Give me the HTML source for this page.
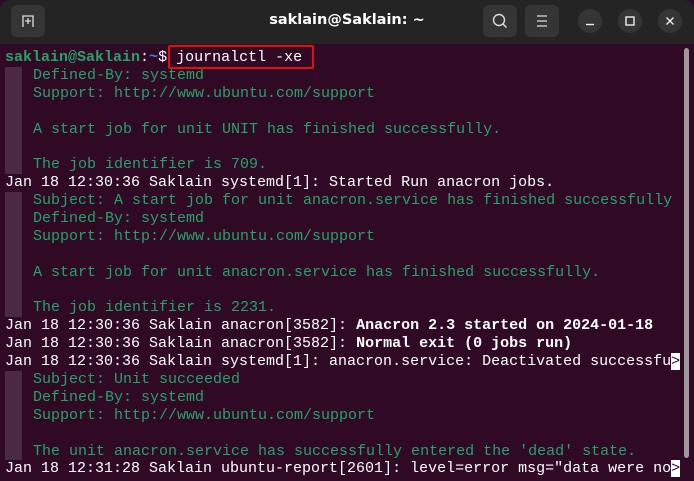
<!DOCTYPE html>
<html><head><style>
html,body{margin:0;padding:0;width:694px;height:481px;overflow:hidden;background:#300a24;}
.hdr{position:absolute;left:0;top:0;width:694px;height:44px;background:#242424;border-radius:10px 10px 0 0;}
.btn{position:absolute;top:5px;width:34px;height:32px;background:#353535;border-radius:6px;}
.circ{position:absolute;top:9px;width:24px;height:24px;border-radius:12px;background:#353535;}
.title{position:absolute;left:0;width:694px;top:12px;text-align:center;color:#fff;font:bold 14.5px "DejaVu Sans","Liberation Sans",sans-serif;}
.term{position:absolute;left:5px;top:49px;font:15px/17.9px "Liberation Mono",monospace;color:#fff;}
.l{height:17.9px;position:relative;white-space:pre;}
.g{color:#26a269;}
.c{padding-left:28px;}
.c::before{content:"";position:absolute;left:0;top:0;width:17px;height:17.9px;background:#4b2843;}
b{font-weight:bold;}
.pg{color:#26a269;font-weight:bold;}
.pb{color:#3f7fd6;font-weight:bold;}
.cur{background:#fff;color:#300a24;}
.red{position:absolute;left:168px;top:45px;width:142px;height:20px;border:2.5px solid #e01010;border-radius:2px;}
.sb{position:absolute;left:684px;top:48px;width:5px;height:410px;background:#9a9a9a;border-radius:3px;}
</style></head><body>
<div class="hdr">
 <div class="btn" style="left:11px"><svg width="34" height="32"><path d="M12 22V11h10v11" fill="none" stroke="#ddd" stroke-width="1.3"/><path d="M14 16h6M17 13v6" stroke="#ddd" stroke-width="1.3"/></svg></div>
 <div class="title">saklain@Saklain: ~</div>
 <div class="btn" style="left:483px"><svg width="34" height="32"><circle cx="16" cy="15" r="5.5" fill="none" stroke="#ddd" stroke-width="1.4"/><path d="M20 19l3.5 3.5" stroke="#ddd" stroke-width="1.4"/></svg></div>
 <div class="btn" style="left:525px"><svg width="34" height="32"><path d="M12 11h10M12 16h10M12 21h10" stroke="#ddd" stroke-width="1.3"/></svg></div>
 <div class="circ" style="left:578px"><svg width="24" height="24"><path d="M8 15.5h8" stroke="#eee" stroke-width="1.4"/></svg></div>
 <div class="circ" style="left:618px"><svg width="24" height="24"><rect x="8" y="8" width="8" height="8" fill="none" stroke="#eee" stroke-width="1.4"/></svg></div>
 <div class="circ" style="left:658px"><svg width="24" height="24"><path d="M8.5 8.5l7 7M15.5 8.5l-7 7" stroke="#eee" stroke-width="1.4"/></svg></div>
</div>
<div class="term"><div class="l"><span class="pg">saklain@Saklain</span>:<span class="pb">~</span>$ journalctl -xe</div><div class="l c g">Defined-By: systemd</div><div class="l c g">Support: http://www.ubuntu.com/support</div><div class="l c"></div><div class="l c g">A start job for unit UNIT has finished successfully.</div><div class="l c"></div><div class="l c g">The job identifier is 709.</div><div class="l">Jan 18 12:30:36 Saklain systemd[1]: Started Run anacron jobs.</div><div class="l c g">Subject: A start job for unit anacron.service has finished successfully</div><div class="l c g">Defined-By: systemd</div><div class="l c g">Support: http://www.ubuntu.com/support</div><div class="l c"></div><div class="l c g">A start job for unit anacron.service has finished successfully.</div><div class="l c"></div><div class="l c g">The job identifier is 2231.</div><div class="l">Jan 18 12:30:36 Saklain anacron[3582]: <b>Anacron 2.3 started on 2024-01-18</b></div><div class="l">Jan 18 12:30:36 Saklain anacron[3582]: <b>Normal exit (0 jobs run)</b></div><div class="l">Jan 18 12:30:36 Saklain systemd[1]: anacron.service: Deactivated successfu<span class="cur">&gt;</span></div><div class="l c g">Subject: Unit succeeded</div><div class="l c g">Defined-By: systemd</div><div class="l c g">Support: http://www.ubuntu.com/support</div><div class="l c"></div><div class="l c g">The unit anacron.service has successfully entered the 'dead' state.</div><div class="l">Jan 18 12:31:28 Saklain ubuntu-report[2601]: level=error msg="data were no<span class="cur">&gt;</span></div></div>
<div class="red"></div>
<div class="sb"></div>
</body></html>
